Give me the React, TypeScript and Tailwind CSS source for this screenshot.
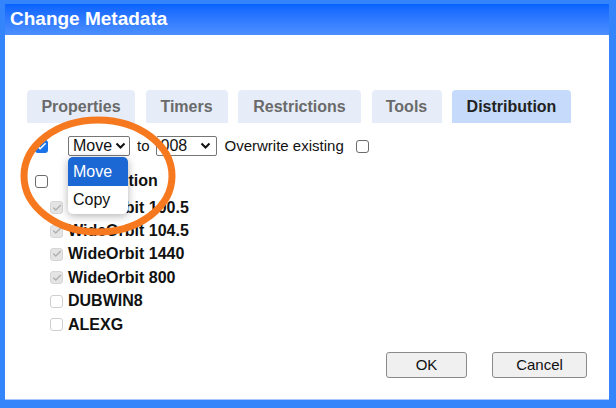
import { Check } from 'lucide-react';

const tabs = [
  { label: 'Properties', w: 'w-[108px]' },
  { label: 'Timers', w: 'w-[82px]' },
  { label: 'Restrictions', w: 'w-[123px]' },
  { label: 'Tools', w: 'w-[70px]' },
  { label: 'Distribution', w: 'w-[119px]', active: true },
];

const stations = [
  { name: 'WideOrbit 100.5', on: true },
  { name: 'WideOrbit 104.5', on: true },
  { name: 'WideOrbit 1440', on: true },
  { name: 'WideOrbit 800', on: true },
  { name: 'DUBWIN8', on: false },
  { name: 'ALEXG', on: false },
];

function Chevron() {
  return (
    <svg width="11" height="8" viewBox="0 0 11 8" className="shrink-0">
      <path d="M1.5 1.5 L5.5 5.5 L9.5 1.5" fill="none" stroke="#111" strokeWidth="2" />
    </svg>
  );
}

function Box({ checked, disabled }: { checked?: boolean; disabled?: boolean }) {
  if (checked && !disabled) {
    return (
      <span className="flex h-[13px] w-[13px] shrink-0 items-center justify-center rounded-[3px] bg-[#1a73e8]">
        <Check className="h-[11px] w-[11px] text-white" strokeWidth={3.5} />
      </span>
    );
  }
  if (checked && disabled) {
    return (
      <span className="flex h-[13px] w-[13px] shrink-0 items-center justify-center rounded-[3px] border border-[#d6d6d6] bg-[#e4e4e4]">
        <Check className="h-[10px] w-[10px] text-[#b0b0b0]" strokeWidth={3.5} />
      </span>
    );
  }
  return (
    <span
      className={
        disabled
          ? 'block h-[13px] w-[13px] shrink-0 rounded-[3px] border border-[#cfcfcf] bg-white'
          : 'block h-[13px] w-[13px] shrink-0 rounded-[3px] border border-[#6b6b6b] bg-white'
      }
    />
  );
}

export default function App() {
  return (
    <div
      className="flex h-[408px] w-[616px] flex-col bg-[#3484fc] pb-[8px] pl-[5px] pr-[7px] pt-[4px]"
      style={{ fontFamily: '"Liberation Sans", Arial, sans-serif' }}
    >
      {/* Title bar */}
      <div className="flex h-[31px] shrink-0 items-center bg-gradient-to-b from-[#0763ff] to-[#4c8fff] pl-[5px] text-[19px] font-bold text-white">
        Change Metadata
      </div>

      {/* Body */}
      <div className="relative flex flex-1 flex-col border-b border-[#a9c8ff] bg-white">
        {/* Tabs */}
        <div className="mt-[55px] flex gap-[10.5px] pl-[22px]">
          {tabs.map(t => (
            <div
              key={t.label}
              className={
                t.active
                  ? `${t.w} flex h-[33px] items-center justify-center rounded-t-[4px] bg-[#c6dbfb] text-[16px] font-bold text-[#222]`
                  : `${t.w} flex h-[33px] items-center justify-center rounded-t-[4px] bg-[#e6edf8] text-[16px] font-bold text-[#6a6a6a]`
              }
            >
              {t.label}
            </div>
          ))}
        </div>

        {/* Move row */}
        <div className="mt-[13px] flex h-[20px] items-center text-[15px] text-[#111]">
          <div className="ml-[30px]">
            <Box checked />
          </div>
          <div className="ml-[20px] flex h-[20px] w-[62px] items-center justify-between rounded-[2px] border border-[#767676] pl-[4px] pr-[3px] text-[16px]">
            <span>Move</span>
            <Chevron />
          </div>
          <span className="ml-[7px]">to</span>
          <div className="ml-[6px] flex h-[20px] w-[61px] items-center justify-between rounded-[2px] border border-[#767676] pl-[4px] pr-[5px] text-[16px]">
            <span>008</span>
            <Chevron />
          </div>
          <span className="ml-[8px]">Overwrite existing</span>
          <div className="ml-[12px]">
            <Box />
          </div>
        </div>

        {/* Distribution header row */}
        <div className="mt-[15px] flex h-[20px] items-center gap-[20px] pl-[30px] text-[16px] font-bold text-[#111]">
          <Box />
          <span>Distribution</span>
        </div>

        {/* Station list */}
        <div className="mt-[5px] flex flex-col pl-[45px]">
          {stations.map(s => (
            <div key={s.name} className="flex h-[23.4px] items-center gap-[5px] text-[16px] font-bold text-[#111]">
              <Box checked={s.on} disabled />
              <span>{s.name}</span>
            </div>
          ))}
        </div>

        {/* Buttons */}
        <div className="mt-auto mb-[21px] flex justify-end gap-[25px] pr-[22px]">
          <button className="h-[26px] w-[81px] rounded-[3px] border border-[#8a8a8a] bg-[#f0f0f0] text-[15px] text-[#111]">
            OK
          </button>
          <button className="h-[26px] w-[95px] rounded-[3px] border border-[#8a8a8a] bg-[#f0f0f0] text-[15px] text-[#111]">
            Cancel
          </button>
        </div>

        {/* Open dropdown menu */}
        <div className="absolute left-[63px] top-[122px] w-[60px] overflow-hidden rounded-[5px] bg-white text-[16px] text-[#111] shadow-[0_2px_8px_rgba(0,0,0,0.3)]">
          <div className="flex h-[29px] items-center bg-[#1b67d3] pl-[5px] text-white">Move</div>
          <div className="flex h-[28px] items-center pl-[5px]">Copy</div>
        </div>

        {/* Orange highlight ring */}
        <svg className="pointer-events-none absolute left-0 top-0" width="200" height="220">
          <ellipse cx="93" cy="141" rx="74" ry="56" fill="none" stroke="#f6791f" strokeWidth="7" />
        </svg>
      </div>
    </div>
  );
}
